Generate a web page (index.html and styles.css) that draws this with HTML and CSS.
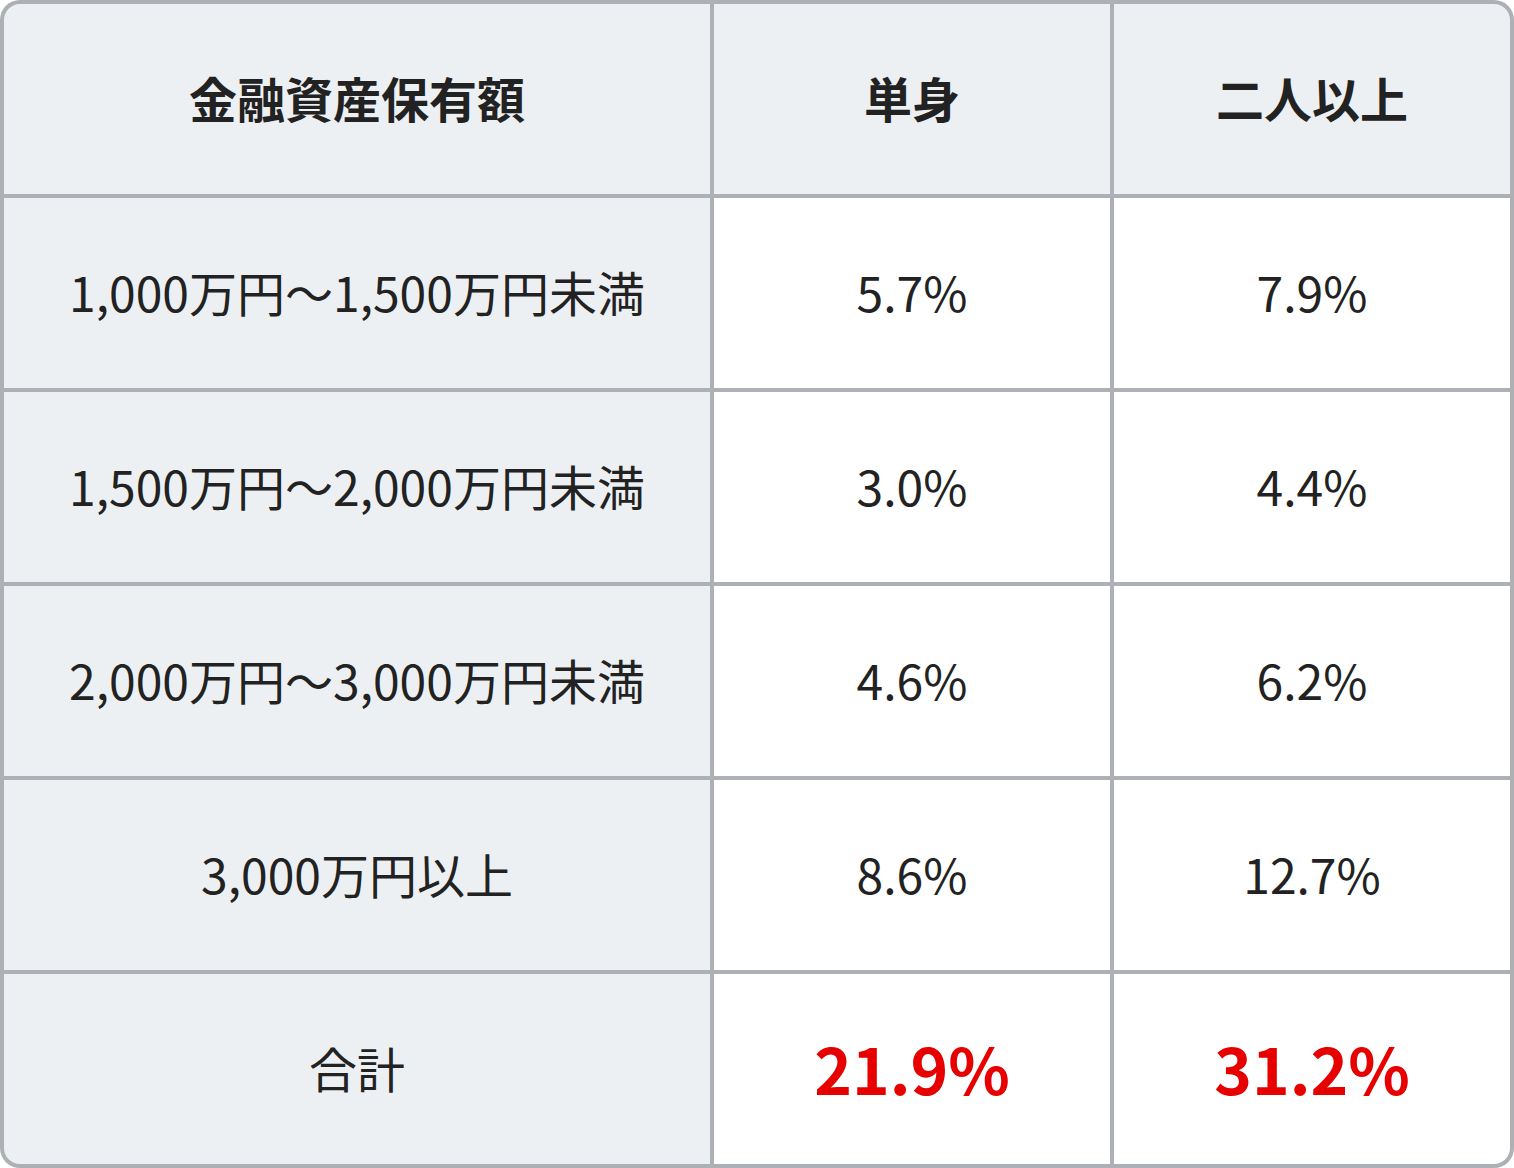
FILE: index.html
```html
<!DOCTYPE html>
<html lang="ja">
<head>
<meta charset="utf-8">
<link rel="stylesheet" href="styles.css">
</head>
<body>
<div class="table">
  <div class="cell head">金融資産保有額</div>
  <div class="cell head">単身</div>
  <div class="cell head">二人以上</div>

  <div class="cell label">1,000万円～1,500万円未満</div>
  <div class="cell val">5.7%</div>
  <div class="cell val">7.9%</div>

  <div class="cell label">1,500万円～2,000万円未満</div>
  <div class="cell val">3.0%</div>
  <div class="cell val">4.4%</div>

  <div class="cell label">2,000万円～3,000万円未満</div>
  <div class="cell val">4.6%</div>
  <div class="cell val">6.2%</div>

  <div class="cell label">3,000万円以上</div>
  <div class="cell val">8.6%</div>
  <div class="cell val">12.7%</div>

  <div class="cell label">合計</div>
  <div class="cell val total">21.9%</div>
  <div class="cell val total">31.2%</div>
</div>
</body>
</html>
```
FILE: styles.css
```css
html, body {
  margin: 0;
  padding: 0;
  background: #ffffff;
}
body {
  font-family: "Noto Sans CJK JP", "Noto Sans", sans-serif;
  color: #222222;
}
.table {
  width: 1514px;
  height: 1168px;
  box-sizing: border-box;
  display: grid;
  grid-template-columns: 706px 396px 396px;
  grid-template-rows: repeat(6, 190px);
  gap: 4px;
  padding: 4px;
  background: #adb0b4;
  border-radius: 20px;
  overflow: hidden;
}
.cell {
  display: flex;
  align-items: center;
  justify-content: center;
  box-sizing: border-box;
  padding-bottom: 4px;
  font-size: 48px;
  background: #ffffff;
}
.head {
  background: #edf0f3;
  font-weight: 700;
}
.label {
  background: #edf0f3;
}
.table > .cell:nth-child(1) { border-top-left-radius: 16px; }
.table > .cell:nth-child(3) { border-top-right-radius: 16px; }
.table > .cell:nth-child(16) { border-bottom-left-radius: 16px; }
.table > .cell:nth-child(18) { border-bottom-right-radius: 16px; }
.total {
  color: #e60000;
  font-weight: 700;
  font-size: 64px;
}
```
